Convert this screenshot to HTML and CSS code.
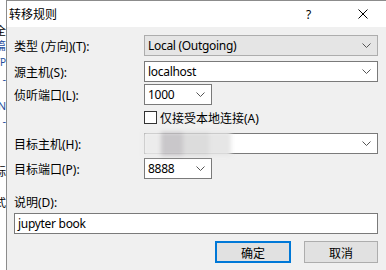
FILE: index.html
```html
<!DOCTYPE html>
<html lang="zh-CN">
<head>
    <meta charset="UTF-8">
    <title>转移规则</title>
    <link rel="stylesheet" href="styles.css">
</head>
<body>

<div class="back-strip">
    <div class="back-line l1">全</div>
    <div class="back-line l2 blue">篇</div>
    <div class="back-line l3 blue">TP</div>
    <div class="back-line l4 blue">-</div>
    <div class="back-line l5 blue">N</div>
    <div class="back-line l6 blue">-</div>
    <div class="back-line l7">标</div>
    <div class="back-line l8">式</div>
</div>

<div class="dialog">
    <div class="titlebar">
        <span class="title">转移规则</span>
        <span class="help">?</span>
        <span class="close">
            <svg width="10" height="10" viewBox="0 0 10 10"><path d="M0.5 0.5 L9.5 9.5 M9.5 0.5 L0.5 9.5" stroke="#000" stroke-width="1" fill="none"/></svg>
        </span>
    </div>

    <div class="body">
        <div class="row r-type">
            <label class="label">类型 (方向)(T):</label>
            <div class="combo combo-gray wide">
                <span class="value">Local (Outgoing)</span>
                <svg class="chev" width="9" height="5" viewBox="0 0 9 5"><path d="M0.5 0.5 L4.5 4.5 L8.5 0.5" stroke="#555" fill="none"/></svg>
            </div>
        </div>

        <div class="row r-src">
            <label class="label">源主机(S):</label>
            <div class="combo wide">
                <span class="value">localhost</span>
                <svg class="chev" width="9" height="5" viewBox="0 0 9 5"><path d="M0.5 0.5 L4.5 4.5 L8.5 0.5" stroke="#555" fill="none"/></svg>
            </div>
        </div>

        <div class="row r-port">
            <label class="label">侦听端口(L):</label>
            <div class="combo short">
                <span class="value">1000</span>
                <svg class="chev" width="9" height="5" viewBox="0 0 9 5"><path d="M0.5 0.5 L4.5 4.5 L8.5 0.5" stroke="#555" fill="none"/></svg>
            </div>
        </div>

        <div class="row r-check">
            <span class="label"></span>
            <label class="check">
                <span class="box"></span>
                <span>仅接受本地连接(A)</span>
            </label>
        </div>

        <div class="row r-dst">
            <label class="label">目标主机(H):</label>
            <div class="combo wide">
                <span class="blurred">
                    <span class="blot b1"></span>
                    <span class="blot b2"></span>
                    <span class="blot b3"></span>
                    <span class="blot b4"></span>
                </span>
                <svg class="chev" width="9" height="5" viewBox="0 0 9 5"><path d="M0.5 0.5 L4.5 4.5 L8.5 0.5" stroke="#555" fill="none"/></svg>
            </div>
        </div>

        <div class="row r-dport">
            <label class="label">目标端口(P):</label>
            <div class="combo short">
                <span class="value">8888</span>
                <svg class="chev" width="9" height="5" viewBox="0 0 9 5"><path d="M0.5 0.5 L4.5 4.5 L8.5 0.5" stroke="#555" fill="none"/></svg>
            </div>
        </div>

        <div class="desc-label">说明(D):</div>
        <div class="text-input"><span class="value">jupyter book</span></div>

        <div class="buttons">
            <button class="btn btn-default">确定</button>
            <button class="btn">取消</button>
        </div>
    </div>
</div>

</body>
</html>
```

FILE: styles.css
```css
body {
    margin: 0;
    width: 386px;
    height: 270px;
    overflow: hidden;
    display: flex;
    background-color: #fff;
    font-family: "Noto Sans", "Noto Sans CJK SC", sans-serif;
    font-size: 12px;
    color: #000;
}
.back-strip {
    width: 6px;
    flex-shrink: 0;
    background-color: #fff;
    overflow: hidden;
}
.back-line {
    display: flex;
    justify-content: flex-end;
    white-space: nowrap;
    height: 15px;
    line-height: 15px;
    font-size: 11px;
    overflow: hidden;
}
.back-line.blue {
    color: #1f4e9c;
}
.l1 { margin-top: 23px; }
.l2 { margin-top: 0; }
.l3 { margin-top: 2px; font-size: 10px; }
.l4 { margin-top: 1px; }
.l5 { margin-top: 12px; }
.l6 { margin-top: 0; }
.l7 { margin-top: 36px; }
.l8 { margin-top: 16px; }

.dialog {
    flex: 1;
    display: flex;
    flex-direction: column;
    border-left: 1px solid #8c8c8c;
    border-top: 1px solid #8c8c8c;
    background-color: #f0f0f0;
}
.titlebar {
    height: 26px;
    background-color: #fff;
    display: flex;
    align-items: center;
    padding-left: 2px;
}
.title {
    flex: 1;
    font-size: 12px;
}
.help {
    width: 12px;
    margin-right: 40px;
    font-size: 12px;
}
.close {
    display: flex;
    margin-right: 18px;
}
.body {
    padding: 8px 8px 0 7px;
    display: flex;
    flex-direction: column;
}
.row {
    display: flex;
    align-items: center;
    height: 21px;
}
.label {
    width: 130px;
    flex-shrink: 0;
}
.r-src { margin-top: 5px; }
.r-port { margin-top: 2px; }
.r-check { margin-top: 5px; height: 15px; }
.r-dst { margin-top: 8px; }
.r-dport { margin-top: 4px; }

.combo {
    height: 21px;
    box-sizing: border-box;
    border: 1px solid #7a7a7a;
    background-color: #fff;
    display: flex;
    align-items: center;
    padding: 0 6px 0 3px;
}
.combo-gray {
    background-color: #e5e5e5;
    border-color: #adadad;
}
.wide {
    flex: 1;
}
.short {
    width: 68px;
}
.value {
    flex: 1;
    white-space: nowrap;
    letter-spacing: -0.3px;
}
.chev {
    flex-shrink: 0;
}
.check {
    display: flex;
    align-items: center;
    gap: 3px;
}
.box {
    width: 13px;
    height: 13px;
    box-sizing: border-box;
    border: 1px solid #333;
    background-color: #fff;
}
.blurred {
    flex: 1;
    display: flex;
    align-items: center;
    height: 28px;
    margin-left: -5px;
    filter: blur(2px);
}
.blot {
    display: block;
    height: 24px;
}
.b1 { width: 18px; background-color: #ececec; }
.b2 { width: 22px; background-color: #c9c7ca; }
.b3 { width: 26px; background-color: #dcdcdc; }
.b4 { width: 22px; background-color: #e6e6e6; }

.desc-label {
    margin-top: 15px;
    height: 18px;
    line-height: 18px;
}
.text-input {
    margin-top: 1px;
    height: 21px;
    box-sizing: border-box;
    border: 1px solid #7a7a7a;
    background-color: #fff;
    display: flex;
    align-items: center;
    padding-left: 3px;
}
.buttons {
    display: flex;
    justify-content: flex-end;
    gap: 13px;
    margin-top: 7px;
}
.btn {
    width: 74px;
    height: 22px;
    box-sizing: border-box;
    border: 1px solid #adadad;
    background-color: #e1e1e1;
    font-family: "Noto Sans CJK SC", sans-serif;
    font-size: 12px;
    padding: 0;
    color: #000;
}
.btn-default {
    width: 76px;
    border: 2px solid #0078d7;
}
```
